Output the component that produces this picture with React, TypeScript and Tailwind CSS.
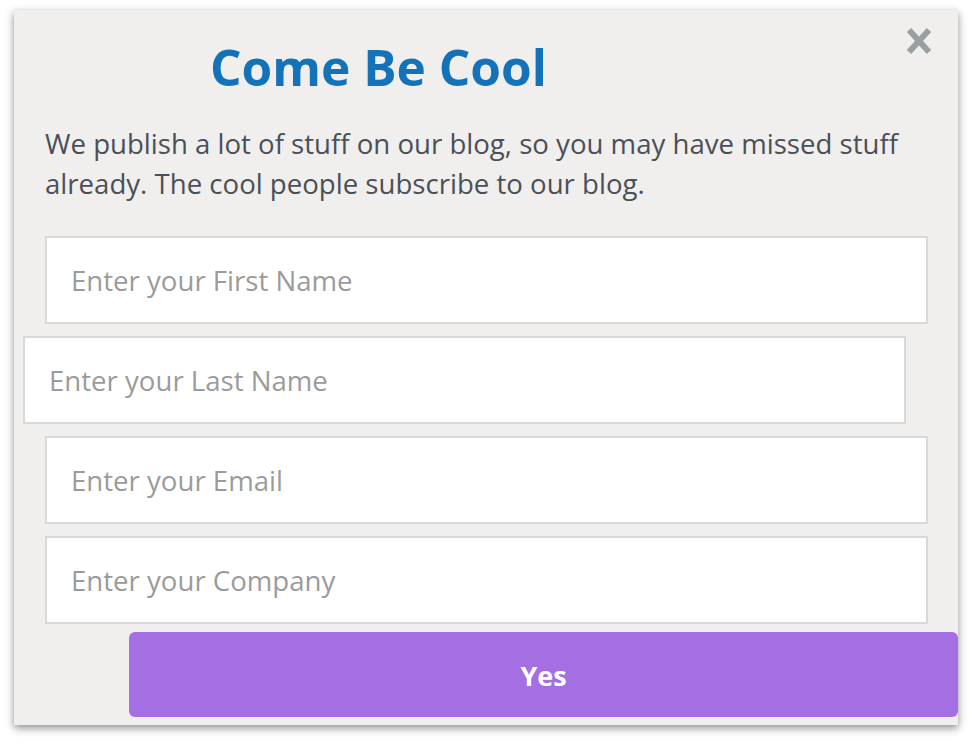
import React from "react";

const fields = [
  { ph: "Enter your First Name", shift: false },
  { ph: "Enter your Last Name", shift: true },
  { ph: "Enter your Email", shift: false },
  { ph: "Enter your Company", shift: false },
];

function CloseX() {
  return (
    <svg width="26" height="28" viewBox="0 0 26 28" className="block">
      <path d="M3 3 L23 25 M23 3 L3 25" stroke="#9a9fa1" strokeWidth="6" strokeLinecap="butt" />
    </svg>
  );
}

export default function App() {
  return (
    <div className="min-h-[744px] bg-white pl-[14px] pt-[10px]" style={{ fontFamily: '"Open Sans", "Noto Sans", sans-serif' }}>
      <div className="relative flex h-[715px] w-[944px] flex-col bg-[#f0efee] pl-[31px] pr-[30px] pt-[31px] shadow-[0_3px_8px_rgba(0,0,0,0.45)]">
        <button className="absolute right-[26px] top-[17px]" aria-label="Close">
          <CloseX />
        </button>

        <h1 className="pl-[165px] text-[49.6px] font-bold leading-[52px] text-[#1473b8]">Come Be Cool</h1>

        <p className="mt-[30px] text-[27.6px] leading-[40px] text-[#4b5057]">
          We publish a lot of stuff on our blog, so you may have missed stuff already. The cool people subscribe to our blog.
        </p>

        <div className="mt-[33px] flex flex-col gap-[12px]">
          {fields.map((f) => (
            <input
              key={f.ph}
              placeholder={f.ph}
              className={`h-[88px] border-2 border-[#d9d9d9] bg-white pl-[24px] text-[27.6px] text-[#4b5057] outline-none placeholder:text-[#9b9b9b] ${
                f.shift ? "-ml-[22px] mr-[22px]" : ""
              }`}
            />
          ))}
        </div>

        <button className="-mr-[30px] ml-[84px] mt-[8px] h-[85px] rounded-[6px] bg-[#a56fe4] pt-[4px] text-[27px] font-bold text-white">
          Yes
        </button>
      </div>
    </div>
  );
}
